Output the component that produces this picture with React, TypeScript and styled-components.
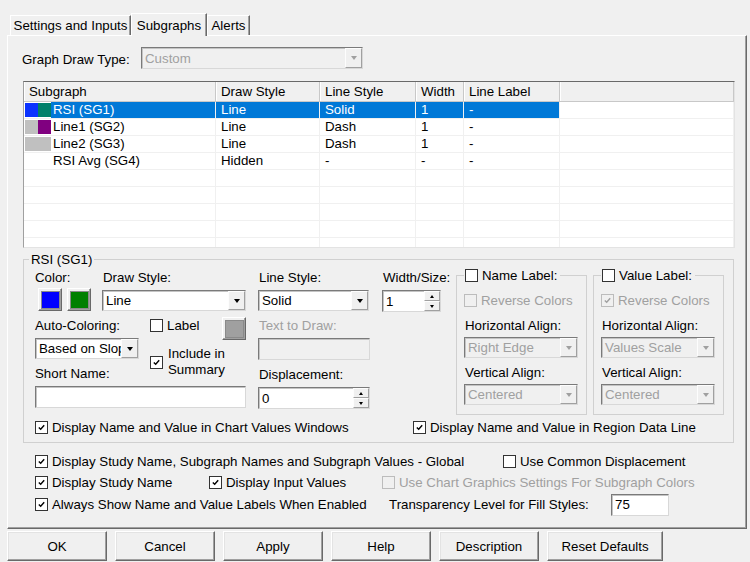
import React from 'react';
import styled, { createGlobalStyle } from 'styled-components';

const GlobalStyle = createGlobalStyle`
  html, body {
    margin: 0;
    padding: 0;
    background: #f0f0f0;
  }
  body {
    font-family: "Liberation Sans", Arial, sans-serif;
    font-size: 13.3px;
    color: #000;
  }
  * {
    box-sizing: border-box;
  }
`;

const Window = styled.div`
  width: 750px;
  height: 562px;
  overflow: hidden;
  background: #f0f0f0;
  display: flex;
  flex-direction: column;
`;

// ---- tabs ----
const TabStrip = styled.div`
  display: flex;
  align-items: flex-end;
  height: 35px;
  padding-left: 10px;
  position: relative;
  z-index: 1;
`;

const Tab = styled.div<{ $active?: boolean; $w: number }>`
  width: ${(p) => p.$w}px;
  height: ${(p) => (p.$active ? 23 : 20)}px;
  margin-bottom: ${(p) => (p.$active ? -1 : 0)}px;
  border: 1px solid;
  border-bottom: none;
  border-color: #fff #696969 transparent #fff;
  box-shadow: inset -1px 0 0 #a0a0a0;
  background: #f0f0f0;
  display: flex;
  align-items: center;
  justify-content: center;
  line-height: 15px;
  white-space: nowrap;
`;

const Panel = styled.div`
  margin-left: 7px;
  width: 740px;
  height: 494px;
  border: 1px solid;
  border-color: #fff #696969 #696969 #fff;
  box-shadow: inset -1px -1px 0 #a0a0a0;
  padding: 11px 0 0 15px;
  display: flex;
  flex-direction: column;
`;

// ---- basic controls ----
const Label = styled.div<{ $disabled?: boolean; $indent?: number }>`
  line-height: 15px;
  height: 15px;
  white-space: nowrap;
  padding-left: ${(p) => p.$indent ?? 0}px;
  color: ${(p) => (p.$disabled ? '#a0a0a0' : '#000')};
`;

const Arrow = styled.span<{ $dir?: 'up' | 'down'; $size?: number; $color?: string }>`
  width: 0;
  height: 0;
  border-left: ${(p) => p.$size ?? 3.5}px solid transparent;
  border-right: ${(p) => p.$size ?? 3.5}px solid transparent;
  ${(p) =>
    p.$dir === 'up'
      ? `border-bottom: ${Math.ceil(p.$size ?? 3.5)}px solid ${p.$color ?? '#000'};`
      : `border-top: ${Math.ceil(p.$size ?? 3.5)}px solid ${p.$color ?? '#000'};`}
`;

const Combo = styled.div<{ $w: number; $h?: number; $disabled?: boolean }>`
  width: ${(p) => p.$w}px;
  height: ${(p) => p.$h ?? 21}px;
  flex: none;
  display: flex;
  background: ${(p) => (p.$disabled ? '#f0f0f0' : '#fff')};
  color: ${(p) => (p.$disabled ? '#a0a0a0' : '#000')};
  border: 1px solid;
  border-color: #7a7a7a #d8d8d8 #d8d8d8 #7a7a7a;
  box-shadow: inset 1px 1px 0 #c4c4c4;
`;

const ComboText = styled.div`
  flex: 1;
  min-width: 0;
  overflow: hidden;
  white-space: nowrap;
  padding-left: 3px;
  display: flex;
  align-items: center;
`;

const DropButton = styled.div`
  width: 17px;
  flex: none;
  background: #f0f0f0;
  border: 1px solid;
  border-color: #fdfdfd #a0a0a0 #a0a0a0 #fdfdfd;
  display: flex;
  align-items: center;
  justify-content: center;
`;

const TextBox = styled.div<{ $w: number; $disabled?: boolean }>`
  width: ${(p) => p.$w}px;
  height: 22px;
  flex: none;
  display: flex;
  background: ${(p) => (p.$disabled ? '#f0f0f0' : '#fff')};
  border: 1px solid;
  border-color: #7a7a7a #d8d8d8 #d8d8d8 #7a7a7a;
  box-shadow: inset 1px 1px 0 #c4c4c4;
`;

const BoxText = styled.div`
  flex: 1;
  padding-left: 3px;
  display: flex;
  align-items: center;
`;

const SpinButtons = styled.div`
  width: 16px;
  flex: none;
  display: flex;
  flex-direction: column;
`;

const SpinButton = styled.div`
  flex: 1;
  background: #f0f0f0;
  border: 1px solid;
  border-color: #fdfdfd #a0a0a0 #a0a0a0 #fdfdfd;
  display: flex;
  align-items: center;
  justify-content: center;
`;

const CheckBox = styled.span<{ $disabled?: boolean }>`
  width: 13px;
  height: 13px;
  flex: none;
  border: 1px solid ${(p) => (p.$disabled ? '#bcbcbc' : '#333')};
  background: ${(p) => (p.$disabled ? '#f0f0f0' : '#fff')};
  display: inline-flex;
  align-items: center;
  justify-content: center;
`;

const CheckRow = styled.div<{ $disabled?: boolean; $w?: number }>`
  display: flex;
  align-items: center;
  gap: 4px;
  line-height: 15px;
  white-space: nowrap;
  flex: none;
  ${(p) => (p.$w ? `width: ${p.$w}px;` : '')}
  color: ${(p) => (p.$disabled ? '#a0a0a0' : '#000')};
`;

const Field = styled.div<{ $w?: number }>`
  display: flex;
  flex-direction: column;
  gap: 5px;
  flex: none;
  ${(p) => (p.$w ? `width: ${p.$w}px;` : '')}
`;

// ---- top row ----
const GraphRow = styled.div`
  display: flex;
  align-items: center;
  height: 22px;
`;

const GraphLabel = styled.div`
  width: 119px;
  margin-left: -1px;
  margin-top: 2px;
`;

// ---- list view ----
const ListView = styled.div`
  margin-top: 12px;
  width: 712px;
  height: 167px;
  background: #fff;
  border: 1px solid;
  border-color: #696969 #e3e3e3 #e3e3e3 #a0a0a0;
  overflow: hidden;
`;

const COLS = '192px 104px 96px 48px 96px 1fr';

const HeaderRow = styled.div`
  display: grid;
  grid-template-columns: ${COLS};
  height: 20px;
  background: #f0f0f0;
  border-bottom: 1px solid #c8c8c8;
`;

const HeaderCell = styled.div`
  padding-left: 5px;
  line-height: 19px;
  border-right: 1px solid #c8c8c8;
  box-shadow: inset 1px 0 0 #fff;
  white-space: nowrap;
`;

const Row = styled.div`
  display: grid;
  grid-template-columns: ${COLS};
  height: 17px;
`;

const Cell = styled.div<{ $selected?: boolean }>`
  padding-left: 5px;
  line-height: 16px;
  border-right: 1px solid #f0f0f0;
  border-bottom: 1px solid #f0f0f0;
  background: ${(p) => (p.$selected ? '#0078d7' : '#fff')};
  color: ${(p) => (p.$selected ? '#fff' : '#000')};
  white-space: nowrap;
`;

const NameCell = styled.div`
  display: flex;
  padding-left: 1px;
  border-right: 1px solid #f0f0f0;
  border-bottom: 1px solid #f0f0f0;
`;

const Swatches = styled.div`
  display: flex;
  width: 26px;
  flex: none;
  padding-top: 1px;
`;

const Swatch = styled.span<{ $c: string }>`
  width: 13px;
  height: 14px;
  background: ${(p) => p.$c};
`;

const NameText = styled.div<{ $selected?: boolean }>`
  flex: 1;
  padding-left: 2px;
  line-height: 16px;
  background: ${(p) => (p.$selected ? '#0078d7' : '#fff')};
  color: ${(p) => (p.$selected ? '#fff' : '#000')};
  white-space: nowrap;
`;

// ---- group box ----
const Group = styled.fieldset`
  margin: 4px 0 0 0;
  width: 711px;
  padding: 3px 9px 7px 11px;
  border: 1px solid #d0d0d0;
  min-width: 0;
`;

const Legend = styled.legend`
  padding: 0 2px;
  margin-left: -6px;
  line-height: 15px;
`;

const TopArea = styled.div`
  display: flex;
  align-items: flex-start;
`;

const LeftArea = styled.div`
  width: 211px;
  flex: none;
  display: flex;
  flex-direction: column;
  gap: 7px;
`;

const FlexRow = styled.div<{ $h?: number }>`
  display: flex;
  align-items: flex-start;
  ${(p) => (p.$h ? `height: ${p.$h}px;` : '')}
`;

const ColorButtons = styled.div`
  display: flex;
  gap: 5px;
  padding-left: 3px;
  margin-top: -2px;
`;

const ColorButton = styled.div<{ $c: string; $mt?: number }>`
  width: 24px;
  height: 23px;
  margin-top: ${(p) => p.$mt ?? 0}px;
  border: 1px solid;
  border-color: #fff #696969 #696969 #fff;
  box-shadow: inset -1px -1px 0 #a0a0a0;
  padding: 2px 3px 3px 2px;
  background: #f0f0f0;
  &::after {
    content: '';
    display: block;
    width: 100%;
    height: 100%;
    background: ${(p) => p.$c};
    border: 1px solid #8a8a8a;
  }
`;

const LabelBlock = styled.div`
  width: 96px;
  margin-left: 11px;
  display: flex;
  flex-direction: column;
`;

const LabelTop = styled.div`
  display: flex;
  justify-content: space-between;
  align-items: flex-start;
`;

const IncludeRow = styled(CheckRow)`
  margin-top: 6px;
  line-height: 16px;
  white-space: normal;
  gap: 5px;
`;

const Column = styled.div<{ $w: number; $ml: number }>`
  width: ${(p) => p.$w}px;
  margin-left: ${(p) => p.$ml}px;
  flex: none;
  display: flex;
  flex-direction: column;
  gap: 7px;
`;

const SubGroup = styled.fieldset<{ $ml: number }>`
  margin: -2px 0 0 ${(p) => p.$ml}px;
  width: 131px;
  flex: none;
  padding: 10px 6px 9px 7px;
  border: 1px solid #d0d0d0;
  min-width: 0;
  display: flex;
  flex-direction: column;
`;

const SubLegend = styled.legend`
  padding: 0 3px 0 1px;
  margin-left: 0;
`;

const SubField = styled.div<{ $mt: number }>`
  display: flex;
  flex-direction: column;
  gap: 4px;
  margin-top: ${(p) => p.$mt}px;
`;

const GroupChecks = styled.div`
  display: flex;
  margin-top: 5px;
`;

// ---- global options ----
const Options = styled.div`
  margin-top: 8px;
  padding-left: 12px;
  display: flex;
  flex-direction: column;
`;

const OptionRow = styled.div<{ $h: number }>`
  display: flex;
  align-items: center;
  height: ${(p) => p.$h}px;
`;

const TransLabel = styled.div`
  width: 228px;
  flex: none;
  padding-left: 6px;
`;

// ---- buttons ----
const ButtonBar = styled.div`
  display: flex;
  gap: 8px;
  padding-left: 7px;
  margin-top: 2px;
`;

const Button = styled.div<{ $w?: number }>`
  width: ${(p) => p.$w ?? 100}px;
  height: 30px;
  border: 1px solid;
  border-color: #fff #696969 #696969 #fff;
  box-shadow: inset -1px -1px 0 #a0a0a0, inset 1px 1px 0 #e3e3e3;
  background: #f0f0f0;
  display: flex;
  align-items: center;
  justify-content: center;
`;

// ---- small helpers ----
const Check = ({ checked, disabled }: { checked?: boolean; disabled?: boolean }) => (
  <CheckBox $disabled={disabled}>
    {checked && (
      <svg width="9" height="9" viewBox="0 0 9 9">
        <path d="M1.8 4.4 L3.7 6.3 L7.2 2.2" fill="none" stroke={disabled ? '#a0a0a0' : '#000'} strokeWidth="1.4" />
      </svg>
    )}
  </CheckBox>
);

const Option = ({
  text,
  checked,
  disabled,
  w,
}: {
  text: string;
  checked?: boolean;
  disabled?: boolean;
  w?: number;
}) => (
  <CheckRow $w={w} $disabled={disabled}>
    <Check checked={checked} disabled={disabled} />
    <span>{text}</span>
  </CheckRow>
);

const Dropdown = ({ value, w, h, disabled }: { value: string; w: number; h?: number; disabled?: boolean }) => (
  <Combo $w={w} $h={h} $disabled={disabled}>
    <ComboText>{value}</ComboText>
    <DropButton>
      <Arrow $color={disabled ? '#a0a0a0' : '#000'} />
    </DropButton>
  </Combo>
);

const Spinner = ({ value, w }: { value: string; w: number }) => (
  <TextBox $w={w}>
    <BoxText>{value}</BoxText>
    <SpinButtons>
      <SpinButton>
        <Arrow $dir="up" $size={2.5} />
      </SpinButton>
      <SpinButton>
        <Arrow $dir="down" $size={2.5} />
      </SpinButton>
    </SpinButtons>
  </TextBox>
);

const rows = [
  { sw: ['#0a32ff', '#00806a'], name: 'RSI (SG1)', draw: 'Line', line: 'Solid', width: '1', label: '-', selected: true },
  { sw: ['#c0c0c0', '#800080'], name: 'Line1 (SG2)', draw: 'Line', line: 'Dash', width: '1', label: '-' },
  { sw: ['#c0c0c0', '#c0c0c0'], name: 'Line2 (SG3)', draw: 'Line', line: 'Dash', width: '1', label: '-' },
  { sw: [], name: 'RSI Avg (SG4)', draw: 'Hidden', line: '-', width: '-', label: '-' },
  { sw: [], name: '', draw: '', line: '', width: '', label: '' },
  { sw: [], name: '', draw: '', line: '', width: '', label: '' },
  { sw: [], name: '', draw: '', line: '', width: '', label: '' },
  { sw: [], name: '', draw: '', line: '', width: '', label: '' },
  { sw: [], name: '', draw: '', line: '', width: '', label: '' },
];

const App: React.FC = () => {
  return (
    <>
      <GlobalStyle />
      <Window>
        <TabStrip>
          <Tab $w={121}>Settings and Inputs</Tab>
          <Tab $w={76} $active>
            Subgraphs
          </Tab>
          <Tab $w={43}>Alerts</Tab>
        </TabStrip>

        <Panel>
          <GraphRow>
            <GraphLabel>Graph Draw Type:</GraphLabel>
            <Dropdown value="Custom" w={222} h={22} disabled />
          </GraphRow>

          <ListView>
            <HeaderRow>
              <HeaderCell>Subgraph</HeaderCell>
              <HeaderCell>Draw Style</HeaderCell>
              <HeaderCell>Line Style</HeaderCell>
              <HeaderCell>Width</HeaderCell>
              <HeaderCell>Line Label</HeaderCell>
              <HeaderCell />
            </HeaderRow>
            {rows.map((r, i) => (
              <Row key={i}>
                <NameCell>
                  <Swatches>
                    {r.sw.map((c, j) => (
                      <Swatch key={j} $c={c} />
                    ))}
                  </Swatches>
                  <NameText $selected={r.selected}>{r.name}</NameText>
                </NameCell>
                <Cell $selected={r.selected}>{r.draw}</Cell>
                <Cell $selected={r.selected}>{r.line}</Cell>
                <Cell $selected={r.selected}>{r.width}</Cell>
                <Cell $selected={r.selected}>{r.label}</Cell>
                <Cell />
              </Row>
            ))}
          </ListView>

          <Group>
            <Legend>RSI (SG1)</Legend>
            <TopArea>
              <LeftArea>
                <FlexRow>
                  <Field $w={67}>
                    <Label>Color:</Label>
                    <ColorButtons>
                      <ColorButton $c="#0000ff" />
                      <ColorButton $c="#008000" />
                    </ColorButtons>
                  </Field>
                  <Field $w={144}>
                    <Label $indent={1}>Draw Style:</Label>
                    <Dropdown value="Line" w={144} />
                  </Field>
                </FlexRow>
                <FlexRow $h={41}>
                  <Field $w={104}>
                    <Label>Auto-Coloring:</Label>
                    <Dropdown value="Based on Slope" w={104} />
                  </Field>
                  <LabelBlock>
                    <LabelTop>
                      <Option text="Label" />
                      <ColorButton $c="#a0a0a0" $mt={-1} />
                    </LabelTop>
                    <IncludeRow>
                      <Check checked />
                      <span>
                        Include in
                        <br />
                        Summary
                      </span>
                    </IncludeRow>
                  </LabelBlock>
                </FlexRow>
                <Field>
                  <Label>Short Name:</Label>
                  <TextBox $w={211} />
                </Field>
              </LeftArea>

              <Column $w={112} $ml={12}>
                <Field>
                  <Label $indent={1}>Line Style:</Label>
                  <Dropdown value="Solid" w={111} />
                </Field>
                <Field>
                  <Label $disabled $indent={1}>
                    Text to Draw:
                  </Label>
                  <TextBox $w={112} $disabled />
                </Field>
                <Field>
                  <Label $indent={1}>Displacement:</Label>
                  <Spinner value="0" w={112} />
                </Field>
              </Column>

              <Column $w={59} $ml={12}>
                <Field>
                  <Label $indent={1}>Width/Size:</Label>
                  <Spinner value="1" w={59} />
                </Field>
              </Column>

              <SubGroup $ml={15}>
                <SubLegend>
                  <Option text="Name Label:" />
                </SubLegend>
                <Option text="Reverse Colors" disabled />
                <SubField $mt={10}>
                  <Label $indent={1}>Horizontal Align:</Label>
                  <Dropdown value="Right Edge" w={114} disabled />
                </SubField>
                <SubField $mt={7}>
                  <Label $indent={1}>Vertical Align:</Label>
                  <Dropdown value="Centered" w={114} disabled />
                </SubField>
              </SubGroup>

              <SubGroup $ml={6}>
                <SubLegend>
                  <Option text="Value Label:" />
                </SubLegend>
                <Option text="Reverse Colors" checked disabled />
                <SubField $mt={10}>
                  <Label $indent={1}>Horizontal Align:</Label>
                  <Dropdown value="Values Scale" w={114} disabled />
                </SubField>
                <SubField $mt={7}>
                  <Label $indent={1}>Vertical Align:</Label>
                  <Dropdown value="Centered" w={114} disabled />
                </SubField>
              </SubGroup>
            </TopArea>

            <GroupChecks>
              <Option text="Display Name and Value in Chart Values Windows" checked w={378} />
              <Option text="Display Name and Value in Region Data Line" checked />
            </GroupChecks>
          </Group>

          <Options>
            <OptionRow $h={21}>
              <Option text="Display Study Name, Subgraph Names and Subgraph Values - Global" checked w={468} />
              <Option text="Use Common Displacement" />
            </OptionRow>
            <OptionRow $h={21}>
              <Option text="Display Study Name" checked w={174} />
              <Option text="Display Input Values" checked w={173} />
              <Option text="Use Chart Graphics Settings For Subgraph Colors" disabled />
            </OptionRow>
            <OptionRow $h={23}>
              <Option text="Always Show Name and Value Labels When Enabled" checked w={348} />
              <TransLabel>Transparency Level for Fill Styles:</TransLabel>
              <TextBox $w={58}>
                <BoxText>75</BoxText>
              </TextBox>
            </OptionRow>
          </Options>
        </Panel>

        <ButtonBar>
          <Button>OK</Button>
          <Button>Cancel</Button>
          <Button>Apply</Button>
          <Button>Help</Button>
          <Button>Description</Button>
          <Button $w={116}>Reset Defaults</Button>
        </ButtonBar>
      </Window>
    </>
  );
};

export default App;
